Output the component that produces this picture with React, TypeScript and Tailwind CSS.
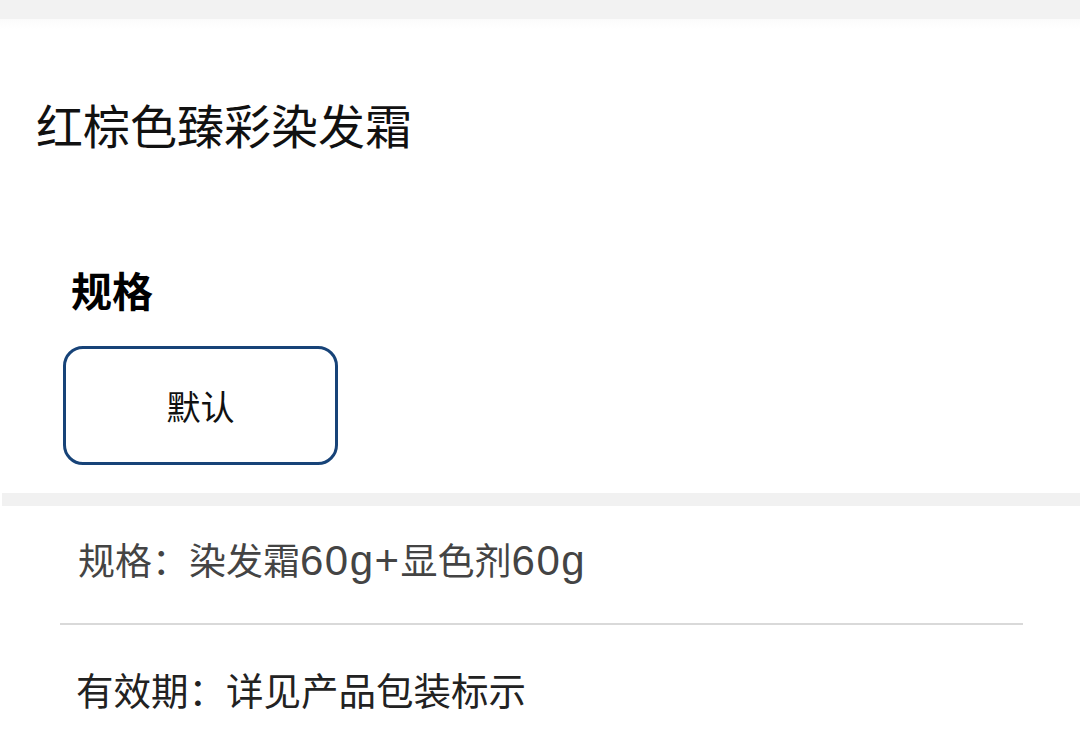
import React from "react";

const font = { fontFamily: '"Noto Sans CJK SC", "Noto Sans", sans-serif' };
const latin = { fontFamily: '"Liberation Sans", Arial, sans-serif' };

export default function App() {
  return (
    <div className="w-[1080px] h-[755px] overflow-hidden bg-white" style={font}>
      <div className="h-[19px] bg-[#f2f2f2]" />
      <div className="h-[10px] bg-gradient-to-b from-[#fbfbfb] to-white" />
      <div className="pl-[36px] pt-[71px] text-[47px] leading-none text-[#111]">红棕色臻彩染发霜</div>
      <div className="pl-[71px] pt-[122px] text-[41px] leading-none font-bold text-black">规格</div>
      <div className="pl-[63px] pt-[36px]">
        <div className="w-[275px] h-[119px] rounded-[20px] border-[3px] border-[#174378] flex items-center justify-center text-[34px] leading-none text-[#111]">
          默认
        </div>
      </div>
      <div className="mt-[28px] ml-[2px] h-[13px] bg-[#f1f1f1]" />
      <div className="pl-[78px] pt-[34px] h-[71px] text-[37px] leading-none text-[#444]">
        规格：染发霜
        <span className="text-[42px] leading-none tracking-[1.5px]" style={latin}>60g+</span>
        显色剂
        <span className="text-[42px] leading-none tracking-[1.5px]" style={latin}>60g</span>
      </div>
      <div className="mt-[46px] ml-[60px] w-[963px] h-[2px] bg-[#d9d9d9]" />
      <div className="pl-[76px] pt-[45px] text-[37.5px] leading-none text-[#222]">有效期：详见产品包装标示</div>
    </div>
  );
}
